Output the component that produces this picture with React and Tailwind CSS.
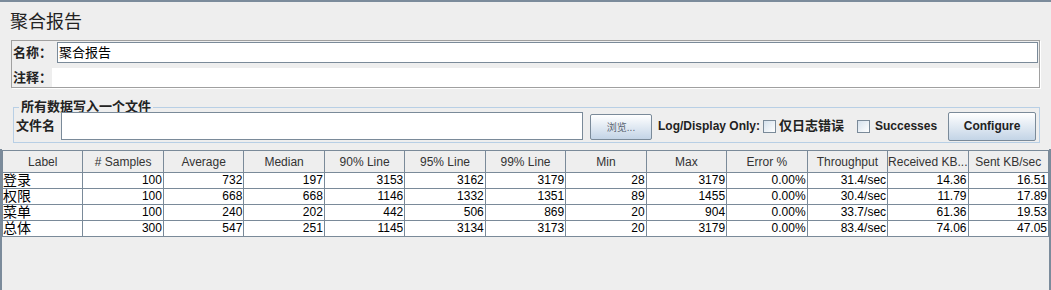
import React from "react";

const headers = [
  "Label",
  "# Samples",
  "Average",
  "Median",
  "90% Line",
  "95% Line",
  "99% Line",
  "Min",
  "Max",
  "Error %",
  "Throughput",
  "Received KB...",
  "Sent KB/sec",
];

const rows = [
  ["登录", "100", "732", "197", "3153", "3162", "3179", "28", "3179", "0.00%", "31.4/sec", "14.36", "16.51"],
  ["权限", "100", "668", "668", "1146", "1332", "1351", "89", "1455", "0.00%", "30.4/sec", "11.79", "17.89"],
  ["菜单", "100", "240", "202", "442", "506", "869", "20", "904", "0.00%", "33.7/sec", "61.36", "19.53"],
  ["总体", "300", "547", "251", "1145", "3134", "3173", "20", "3179", "0.00%", "83.4/sec", "74.06", "47.05"],
];

const font = { fontFamily: '"Liberation Sans", "Noto Sans CJK SC", sans-serif' };

// 小复选框
const Check = () => (
  <span className="inline-block w-[13px] h-[13px] shrink-0 border border-[#7a8a99] bg-gradient-to-br from-[#d5e1ec] to-white" />
);

const App = () => {
  return (
    <div
      style={font}
      className="w-[1051px] h-[290px] bg-[#eeeeee] border-t-2 border-[#7b8b9b] overflow-hidden text-[#333]"
    >
      {/* 标题 */}
      <div className="pl-[10px] pt-[8px] h-[38px] text-[18px] leading-[24px] text-[#222]">
        聚合报告
      </div>

      {/* 名称 / 注释 */}
      <div className="ml-[11px] w-[1029px] border border-[#a0a0a0] shadow-[1px_1px_0_#fff] pt-[1px]">
        <div className="flex items-center h-[21px]">
          <div className="w-[45px] pl-[1px] text-[13px] font-bold text-[#222]">名称：</div>
          <div className="flex-1 mr-[1px] h-[21px] border border-[#7a8a99] bg-white flex items-center pl-[1px] text-[13px] text-black">
            聚合报告
          </div>
        </div>
        <div className="flex items-center h-[19px] mt-[5px]">
          <div className="w-[40px] pl-[1px] text-[13px] font-bold text-[#222]">注释：</div>
          <div className="flex-1 h-[19px] bg-white" />
        </div>
      </div>

      {/* 所有数据写入一个文件 */}
      <fieldset className="ml-[13px] mt-[11px] w-[1027px] border border-[#b8cfe5] pl-[2px] pr-[2px] pb-[1px]">
        <legend className="ml-[3px] px-[2px] text-[13px] font-bold leading-[16px] text-[#222]">
          所有数据写入一个文件
        </legend>
        <div className="flex items-center h-[30px] mt-[-4px] whitespace-nowrap">
          <div className="w-[45px] shrink-0 text-[13px] font-bold text-[#222]">文件名</div>
          <div className="w-[522px] shrink-0 h-[28px] border border-[#7a8a99] bg-white" />
          <button className="ml-[7px] shrink-0 w-[62px] h-[26px] mt-[2px] border border-[#7a8a99] rounded-[2px] bg-gradient-to-b from-white to-[#c3d4e6] text-[10px] text-[#5a6470]">
            浏览...
          </button>
          <div className="ml-[6px] shrink-0 text-[12px] font-bold text-[#222]">Log/Display Only:</div>
          <div className="ml-[3px] shrink-0 flex items-center">
            <Check />
          </div>
          <div className="ml-[3px] shrink-0 text-[13px] font-bold text-[#222]">仅日志错误</div>
          <div className="ml-[13px] shrink-0 flex items-center">
            <Check />
          </div>
          <div className="ml-[5px] shrink-0 text-[12px] font-bold text-[#222]">Successes</div>
          <button className="ml-[11px] shrink-0 w-[88px] h-[29px] border border-[#7a8a99] rounded-[2px] bg-gradient-to-b from-white to-[#c3d4e6] text-[12px] font-bold text-[#222]">
            Configure
          </button>
        </div>
      </fieldset>

      {/* 表格 */}
      <div className="mt-[6px] w-[1051px] h-[200px] border-l-2 border-r-2 border-[#7b8b9b] pt-[1px]">
        <div className="grid grid-cols-[repeat(13,minmax(0,1fr))] w-[1047px] border-t border-l border-[#7a8a99]">
          {headers.map((h) => (
            <div
              key={h}
              className="h-[22px] flex items-center justify-center border-r border-b border-[#7a8a99] bg-[#eeeeee] text-[12px] text-[#333] whitespace-nowrap overflow-hidden"
            >
              {h}
            </div>
          ))}
          {rows.map((r) =>
            r.map((c, i) => (
              <div
                key={r[0] + i}
                className={`h-[16px] flex items-center border-r border-b border-[#7a8a99] bg-white leading-[15px] text-black whitespace-nowrap overflow-hidden ${
                  i === 0 ? "justify-start text-[14px]" : "justify-end text-[12px] pr-[1px]"
                }`}
              >
                {c}
              </div>
            ))
          )}
        </div>
      </div>
    </div>
  );
};

export default App;
